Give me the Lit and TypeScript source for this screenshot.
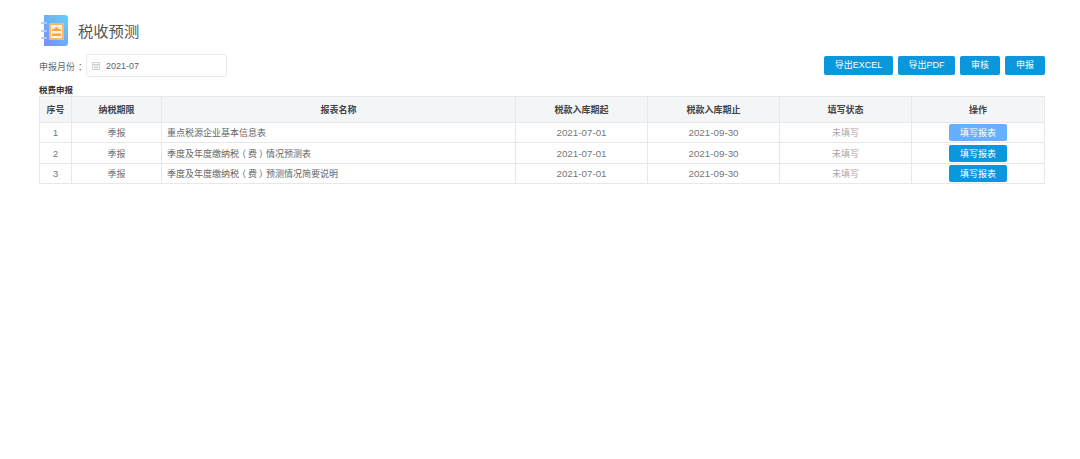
import { LitElement, html, css } from "lit";
import { customElement } from "lit/decorators.js";

const rows = [
  ["1", "季报", html`重点税源企业基本信息表`, true],
  ["2", "季报", html`季度及年度缴纳税<span class="pl">（</span>费<span class="pr">）</span>情况预测表`, false],
  ["3", "季报", html`季度及年度缴纳税<span class="pl">（</span>费<span class="pr">）</span>预测情况简要说明`, false],
] as const;

@customElement("app-root")
export class AppRoot extends LitElement {
  static styles = css`
    :host {
      display: block;
      width: 1080px;
      height: 459px;
      box-sizing: border-box;
      padding: 14px 35px 0 39px;
      background: #fff;
      color: #606266;
      font-family: "Noto Sans CJK SC", "Liberation Sans", sans-serif;
      overflow: hidden;
    }
    .title { display: flex; align-items: center; gap: 6px; height: 32px; }
    .title svg { display: block; overflow: visible; }
    .title h1 { margin: 0; font-size: 15.300px; font-weight: 400; color: #555; line-height: 32px; }
    .bar { display: flex; align-items: center; margin-top: 8px; height: 23px; }
    .label { font-size: 9px; color: #666; width: 47px; white-space: nowrap; padding-top: 1px; }
    .colon { padding-left: 3px; }
    .date {
      width: 141px; height: 23px; box-sizing: border-box;
      border: 1px solid #e8eaee; border-radius: 3px;
      display: flex; align-items: center; padding-left: 5px; gap: 6px;
      font: 9px "Liberation Sans", sans-serif; color: #606266;
    }
    .spacer { flex: 1; }
    .btns { display: flex; gap: 5px; }
    .btn {
      height: 19px; box-sizing: border-box; border-radius: 2px; background: #0a97dc; color: #fff;
      font-size: 9px; line-height: 19px; text-align: center; white-space: nowrap;
      font-family: "Liberation Sans", "Noto Sans CJK SC", sans-serif;
    }
    .w69 { width: 69px; } .w57 { width: 57px; } .w40 { width: 40px; }
    h2 { margin: 6px 0 0; font-size: 8.500px; line-height: 12px; font-weight: 700; color: #333; }
    table { table-layout: fixed; border-collapse: collapse; width: 1006px; margin-top: 1px; font-size: 9px; }
    th, td { border: 1px solid #e6e8eb; padding: 0; text-align: center; white-space: nowrap; }
    th { background: #f4f5f7; height: 25px; font-weight: 700; color: #444; font-size: 9px; }
    td { height: 19.400px; color: #707070; }
    td.num { font: 9.800px "Liberation Sans", sans-serif; color: #777; }
    td.name { text-align: left; padding-left: 5px; color: #666; }
    td.status { color: #a8a8a8; }
    .pl, .pr { display: inline-block; }
    .pl { transform: translateX(-2px); }
    .pr { transform: translateX(2px); }
    .fill {
      display: block; width: 58px; height: 17px; margin: 0 auto; border-radius: 2px;
      background: #0a97dc; color: #fff; line-height: 17px; font-size: 9px;
    }
    .fill.on { background: #66b1ff; }
  `;

  render() {
    return html`
      <div class="title">
        <svg width="33" height="32" viewBox="0 0 33 32">
          <defs>
            <linearGradient id="g" x1="0.9" y1="0" x2="0.1" y2="1">
              <stop offset="0" stop-color="#62cffa" />
              <stop offset="1" stop-color="#7a8ffa" />
            </linearGradient>
          </defs>
          <path d="M5 1h21a3 3 0 0 1 3 3v25a3 3 0 0 1-3 3H5z" fill="url(#g)" />
          <rect x="2" y="8" width="6" height="2" rx="1" fill="#a5d2fd" />
          <rect x="2" y="16" width="6" height="2" rx="1" fill="#a5d2fd" />
          <rect x="2" y="23" width="6" height="2" rx="1" fill="#a5d2fd" />
          <rect x="10" y="9" width="15" height="17" fill="#fbb768" />
          <rect x="12" y="11" width="11" height="13" fill="#fdf1e2" />
          <path d="M13 17h9v-2h-2l-2-2h-1l-2 2h-2z" fill="#f6a545" />
          <rect x="13" y="19.500" width="9" height="2.500" fill="#f6a545" />
        </svg>
        <h1>税收预测</h1>
      </div>
      <div class="bar">
        <span class="label">申报月份<span class="colon">：</span></span>
        <div class="date">
          <svg width="8" height="8" viewBox="0 0 8 8">
            <path d="M.5.500h7v7h-7zM.5 2.500h7M2 4h4M2 5.500h4" fill="none" stroke="#cfcfcf" stroke-width="1" />
          </svg>
          <span>2021-07</span>
        </div>
        <div class="spacer"></div>
        <div class="btns">
          <div class="btn w69">导出EXCEL</div>
          <div class="btn w57">导出PDF</div>
          <div class="btn w40">审核</div>
          <div class="btn w40">申报</div>
        </div>
      </div>
      <h2>税费申报</h2>
      <table>
        <colgroup>
          <col style="width:32px" /><col style="width:90px" /><col style="width:354px" />
          <col style="width:132px" /><col style="width:132px" /><col style="width:132px" /><col style="width:133px" />
        </colgroup>
        <thead>
          <tr>
            <th>序号</th><th>纳税期限</th><th>报表名称</th><th>税款入库期起</th>
            <th>税款入库期止</th><th>填写状态</th><th>操作</th>
          </tr>
        </thead>
        <tbody>
          ${rows.map(
            ([n, term, name, on]) => html`<tr>
              <td class="num">${n}</td>
              <td>${term}</td>
              <td class="name">${name}</td>
              <td class="num">2021-07-01</td>
              <td class="num">2021-09-30</td>
              <td class="status">未填写</td>
              <td><span class="fill ${on ? "on" : ""}">填写报表</span></td>
            </tr>`
          )}
        </tbody>
      </table>
    `;
  }
}
